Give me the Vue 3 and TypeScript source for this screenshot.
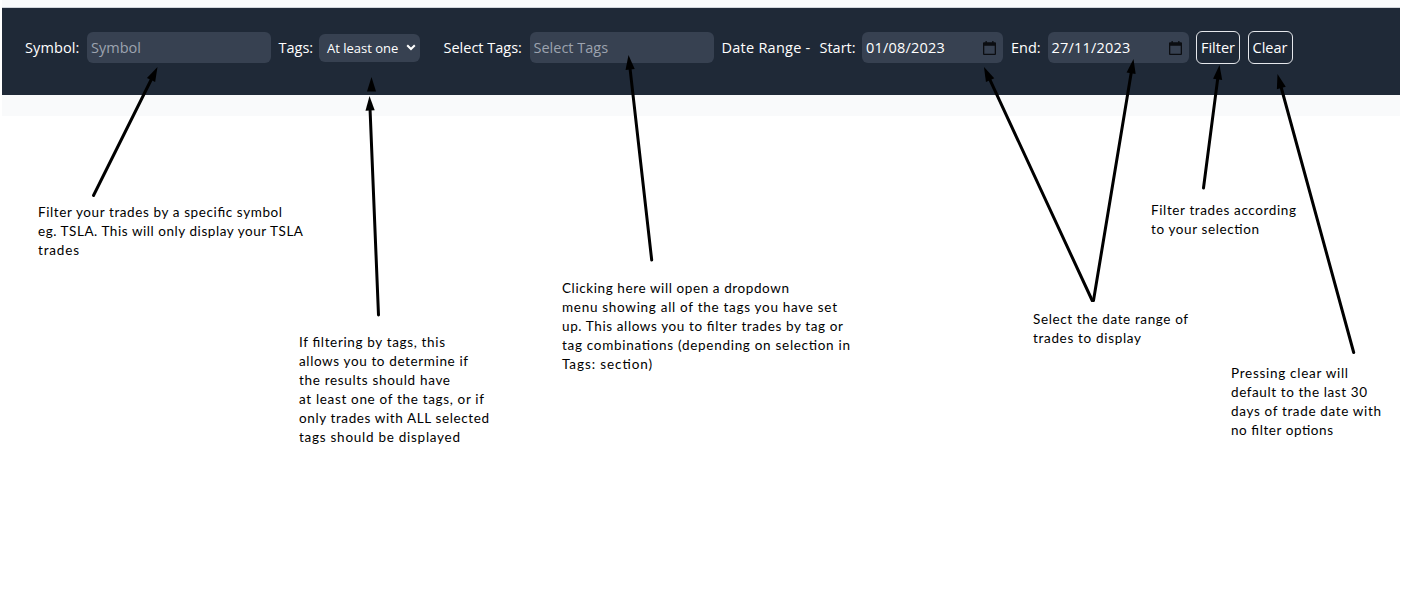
<script setup lang="ts">
import { ref } from 'vue'

interface NoteLine {
  text: string
  width: number
}
interface Note {
  x: number
  y: number
  lines: NoteLine[]
}
interface Arrow {
  from: [number, number]
  to: [number, number]
}

const symbol = ref('')
const tags = ref('')

const notes: Note[] = [
  { x: 38, y: 217, lines: [
    { text: 'Filter your trades by a specific symbol', width: 244 },
    { text: 'eg. TSLA. This will only display your TSLA', width: 265 },
    { text: 'trades', width: 41 },
  ] },
  { x: 299, y: 347, lines: [
    { text: 'If filtering by tags, this', width: 146 },
    { text: 'allows you to determine if', width: 169 },
    { text: 'the results should have', width: 151 },
    { text: 'at least one of the tags, or if', width: 185 },
    { text: 'only trades with ALL selected', width: 190 },
    { text: 'tags should be displayed', width: 161 },
  ] },
  { x: 562, y: 293, lines: [
    { text: 'Clicking here will open a dropdown', width: 227 },
    { text: 'menu showing all of the tags you have set', width: 275 },
    { text: 'up. This allows you to filter trades by tag or', width: 281 },
    { text: 'tag combinations (depending on selection in', width: 288 },
    { text: 'Tags: section)', width: 90 },
  ] },
  { x: 1033, y: 324, lines: [
    { text: 'Select the date range of', width: 155 },
    { text: 'trades to display', width: 108 },
  ] },
  { x: 1151, y: 215, lines: [
    { text: 'Filter trades according', width: 145 },
    { text: 'to your selection', width: 108 },
  ] },
  { x: 1231, y: 378, lines: [
    { text: 'Pressing clear will', width: 117 },
    { text: 'default to the last 30', width: 136 },
    { text: 'days of trade date with', width: 150 },
    { text: 'no filter options', width: 102 },
  ] },
]

const arrows: Arrow[] = [
  { from: [93.5, 195.5], to: [157.5, 67] },
  { from: [378.5, 315], to: [369.5, 96] },
  { from: [651.7, 260], to: [628.5, 55] },
  { from: [1092.2, 300.5], to: [984, 67] },
  { from: [1093.5, 300.5], to: [1133.5, 59] },
  { from: [1203.5, 188], to: [1219.5, 65] },
  { from: [1353.7, 352.5], to: [1277.5, 74] },
]

const headLength = 14.5
const headHalf = 4.6

function geometry(a: Arrow) {
  const dx = a.to[0] - a.from[0]
  const dy = a.to[1] - a.from[1]
  const len = Math.hypot(dx, dy)
  const ux = dx / len
  const uy = dy / len
  const bx = a.to[0] - ux * headLength
  const by = a.to[1] - uy * headLength
  return {
    bx,
    by,
    head: `${a.to[0]},${a.to[1]} ${bx - uy * headHalf},${by + ux * headHalf} ${bx + uy * headHalf},${by - ux * headHalf}`,
  }
}
const drawn = arrows.map((a) => ({ ...a, ...geometry(a) }))
</script>

<template>
  <main class="page">
    <section class="panel">
      <form class="bar" @submit.prevent>
        <label class="lbl l-symbol">Symbol:</label>
        <input v-model="symbol" class="field text" placeholder="Symbol" />
        <label class="lbl l-tags">Tags:</label>
        <div class="select">
          <span>At least one</span>
          <svg width="10" height="7" viewBox="0 0 10 7"><path d="M1.2 1.2 L5 5 L8.8 1.2" fill="none" stroke="#fff" stroke-width="2" /></svg>
        </div>
        <label class="lbl l-select">Select Tags:</label>
        <input v-model="tags" class="field text" placeholder="Select Tags" />
        <label class="lbl l-range">Date Range -</label>
        <label class="lbl l-start">Start:</label>
        <div v-for="(d, i) in ['01/08/2023', '27/11/2023']" :key="d" class="date-group">
          <label v-if="i === 1" class="lbl l-end">End:</label>
          <div class="field date">
            <span>{{ d }}</span>
            <svg width="13" height="14" viewBox="0 0 13 14">
              <path d="M2.5 0h1.3v1.3h5.4V0h1.3v1.3H12a1 1 0 0 1 1 1V13a1 1 0 0 1-1 1H1a1 1 0 0 1-1-1V2.300a1 1 0 0 1 1-1h1.500zM1.300 4.700v8h10.400v-8z" fill="#0b0d11" fill-rule="evenodd" />
            </svg>
          </div>
        </div>
        <button class="btn filter" type="submit"><span>Filter</span></button>
        <button class="btn clear" type="button"><span>Clear</span></button>
      </form>
    </section>

    <svg class="annotations" width="1403" height="594" viewBox="0 0 1403 594">
      <g v-for="(a, i) in drawn" :key="i">
        <line :x1="a.from[0]" :y1="a.from[1]" :x2="a.bx" :y2="a.by" />
        <polygon :points="a.head" />
      </g>
      <polygon points="371.500,77 367,91.500 376,91.500" />
      <g v-for="(n, i) in notes" :key="'n' + i" class="note">
        <text
          v-for="(l, j) in n.lines"
          :key="j"
          :x="n.x"
          :y="n.y + j * 19"
          :textLength="l.width"
        >{{ l.text }}</text>
      </g>
    </svg>
  </main>
</template>

<style>
body {
  background: #fff;
}
</style>

<style scoped>
.page {
  position: relative;
  width: 1403px;
  height: 594px;
  overflow: hidden;
  font-family: 'Open Sans', 'Noto Sans', sans-serif;
}
.panel {
  box-sizing: border-box;
  width: 1398px;
  height: 116px;
  margin-left: 2px;
  padding-top: 7px;
  background: #f9fafb;
}
.bar {
  box-sizing: border-box;
  display: flex;
  align-items: center;
  height: 88px;
  padding: 0 0 8px 23px;
  border-top: 1px solid #d1d5db;
  background: #1f2937;
  color: #fff;
  font-size: 14.5px;
}
.lbl {
  flex: none;
  white-space: nowrap;
  line-height: 20px;
}
.l-symbol { width: 62px; letter-spacing: 0.1px; }
.l-tags { width: 40.500px; margin-left: 7.500px; }
.l-select { width: 86px; margin-left: 23.500px; }
.l-range { width: 98px; margin-left: 8px; letter-spacing: 0.25px; }
.l-start { width: 42.500px; }
.l-end { width: 36.500px; margin-left: 8px; }
.field {
  box-sizing: border-box;
  flex: none;
  height: 31px;
  border: 0;
  border-radius: 6px;
  background: #374151;
  color: #fff;
  font: inherit;
  outline: none;
}
.text {
  width: 184px;
  padding: 0 4px;
}
.text::placeholder {
  color: #9ca3af;
  opacity: 1;
}
.select {
  box-sizing: border-box;
  display: flex;
  flex: none;
  align-items: center;
  justify-content: space-between;
  width: 101px;
  height: 28px;
  padding: 0 4px 0 8px;
  border-radius: 6px;
  background: #374151;
  font-size: 13px;
  white-space: nowrap;
}
.date-group {
  display: flex;
  flex: none;
  align-items: center;
}
.date {
  display: flex;
  align-items: center;
  justify-content: space-between;
  width: 141px;
  padding: 0 7px 0 4px;
}
.date span {
  letter-spacing: 0.2px;
}
.btn {
  box-sizing: border-box;
  display: flex;
  flex: none;
  align-items: center;
  justify-content: center;
  height: 33px;
  margin-left: 7.500px;
  padding: 0;
  border: 1px solid #e5e7eb;
  border-radius: 6px;
  background: transparent;
  color: #fff;
  font: inherit;
}
.filter { width: 44px; }
.clear { width: 45px; }
.annotations {
  position: absolute;
  inset: 0;
  pointer-events: none;
}
.annotations line {
  stroke: #000;
  stroke-width: 3;
  stroke-linecap: round;
}
.note text {
  font-family: Lato, 'Open Sans', sans-serif;
  font-size: 13.5px;
  fill: #000;
}
</style>
